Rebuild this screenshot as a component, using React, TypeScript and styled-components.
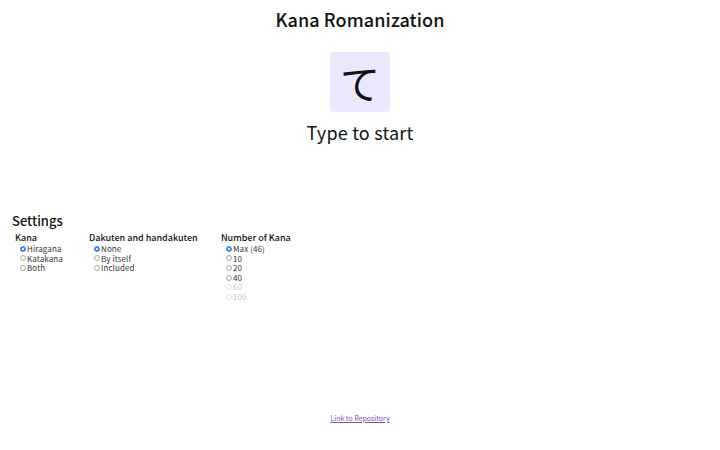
import styled, { createGlobalStyle } from 'styled-components';
import * as React from 'react';

const GlobalStyle = createGlobalStyle`
	body {
		margin: 0;
		font-family: 'Noto Sans CJK JP', 'Noto Sans', sans-serif;
		color: #111;
		background: #fff;
	}
`;

const Page = styled.div`
	width: 720px;
	height: 450px;
	display: flex;
	flex-direction: column;
	box-sizing: border-box;
	padding: 8px 12px 0;
`;

const Title = styled.h1`
	margin: 0;
	text-align: center;
	font-size: 18px;
	line-height: 22px;
	font-weight: 500;
	letter-spacing: 0.1px;
`;

const Quiz = styled.div`
	display: flex;
	flex-direction: column;
	align-items: center;
	margin-top: 22px;
`;

const KanaBox = styled.div`
	width: 60px;
	height: 60px;
	border-radius: 4px;
	background: #ebe8fd;
	display: flex;
	align-items: center;
	justify-content: center;
	font-size: 40px;
	line-height: 1;
	font-weight: 400;
`;

const Prompt = styled.div`
	margin-top: 8px;
	font-size: 18px;
	line-height: 24px;
	font-weight: 400;
	letter-spacing: 0.2px;
`;

const Settings = styled.section`
	margin-top: 69px;
`;

const SettingsTitle = styled.h2`
	margin: 0;
	font-size: 13px;
	line-height: 16px;
	font-weight: 500;
`;

const Groups = styled.div`
	display: flex;
	padding-left: 3px;
	margin-top: 3px;
`;

const Group = styled.fieldset<{ $width: number }>`
	border: 0;
	margin: 0;
	padding: 0;
	width: ${(p) => p.$width}px;
`;

const GroupTitle = styled.div`
	font-size: 9px;
	line-height: 12px;
	font-weight: 500;
`;

const Option = styled.label<{ $disabled?: boolean }>`
	display: flex;
	align-items: center;
	padding-left: 5px;
	font-size: 8px;
	line-height: 9.6px;
	letter-spacing: 0.1px;
	color: ${(p) => (p.$disabled ? '#c8c8c8' : '#333')};
`;

const Radio = styled.span<{ $checked?: boolean; $disabled?: boolean }>`
	width: 4px;
	height: 4px;
	border-radius: 50%;
	margin-right: 1px;
	box-sizing: content-box;
	border: 0.5px solid ${(p) => (p.$checked ? '#3b82f6' : p.$disabled ? '#e6e6e6' : '#aaa')};
	background: ${(p) => (p.$checked ? 'radial-gradient(circle, #dbe8fd 0 0.9px, #3b82f6 1.4px)' : '#fff')};
`;

const Footer = styled.div`
	margin-top: auto;
	margin-bottom: 27px;
	text-align: center;
	font-size: 7px;
	line-height: 9px;
`;

const RepoLink = styled.a`
	color: #7a4fb0;
`;

interface Opt {
	label: string;
	checked?: boolean;
	disabled?: boolean;
}

const groups: { title: string; width: number; options: Opt[] }[] = [
	{
		title: 'Kana',
		width: 74,
		options: [{ label: 'Hiragana', checked: true }, { label: 'Katakana' }, { label: 'Both' }],
	},
	{
		title: 'Dakuten and handakuten',
		width: 132,
		options: [{ label: 'None', checked: true }, { label: 'By itself' }, { label: 'Included' }],
	},
	{
		title: 'Number of Kana',
		width: 120,
		options: [
			{ label: 'Max (46)', checked: true },
			{ label: '10' },
			{ label: '20' },
			{ label: '40' },
			{ label: '60', disabled: true },
			{ label: '100', disabled: true },
		],
	},
];

export default function App() {
	return (
		<>
			<GlobalStyle />
			<Page>
				<Title>Kana Romanization</Title>
				<Quiz>
					<KanaBox>て</KanaBox>
					<Prompt>Type to start</Prompt>
				</Quiz>
				<Settings>
					<SettingsTitle>Settings</SettingsTitle>
					<Groups>
						{groups.map((g) => (
							<Group key={g.title} $width={g.width}>
								<GroupTitle>{g.title}</GroupTitle>
								{g.options.map((o) => (
									<Option key={o.label} $disabled={o.disabled}>
										<Radio $checked={o.checked} $disabled={o.disabled} />
										{o.label}
									</Option>
								))}
							</Group>
						))}
					</Groups>
				</Settings>
				<Footer>
					<RepoLink href="#">Link to Repository</RepoLink>
				</Footer>
			</Page>
		</>
	);
}
